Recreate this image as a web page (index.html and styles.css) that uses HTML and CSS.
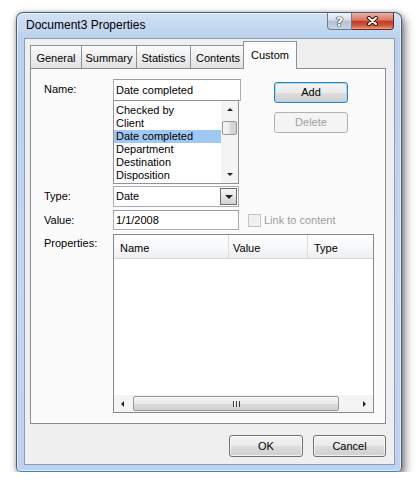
FILE: index.html
```html
<!DOCTYPE html>
<html lang="en">
<head>
    <meta charset="UTF-8">
    <title>Document3 Properties</title>
    <link rel="stylesheet" href="styles.css">
</head>
<body>
    <div class="desk">
        <div class="window">
            <div class="titlebar">
                <span class="title">Document3 Properties</span>
                <div class="caption-btns">
                    <span class="cap help">?</span>
                    <span class="cap close">
                        <svg width="13" height="10" viewBox="0 0 13 10">
                            <path d="M3 2 L10 8 M10 2 L3 8" stroke="#3d0c06" stroke-width="4.2" stroke-linecap="round"/>
                            <path d="M3 2 L10 8 M10 2 L3 8" stroke="#fff" stroke-width="2.2" stroke-linecap="round"/>
                        </svg>
                    </span>
                </div>
            </div>

            <div class="client">
                <div class="tabs">
                    <span class="tab">General</span>
                    <span class="tab">Summary</span>
                    <span class="tab">Statistics</span>
                    <span class="tab">Contents</span>
                    <span class="tab active">Custom</span>
                </div>

                <div class="panel">
                    <div class="name-row">
                        <span class="lbl">Name:</span>
                        <div class="stack">
                            <div class="input wide">Date completed</div>
                            <div class="listbox">
                                <ul class="items">
                                    <li>Checked by</li>
                                    <li>Client</li>
                                    <li class="selected">Date completed</li>
                                    <li>Department</li>
                                    <li>Destination</li>
                                    <li>Disposition</li>
                                </ul>
                                <div class="vscroll">
                                    <span class="sb-btn"><i class="arrow up"></i></span>
                                    <span class="vthumb"></span>
                                    <span class="sb-track"></span>
                                    <span class="sb-btn"><i class="arrow down"></i></span>
                                </div>
                            </div>
                        </div>
                        <div class="side-btns">
                            <span class="btn default">Add</span>
                            <span class="btn disabled">Delete</span>
                        </div>
                    </div>

                    <div class="row type-row">
                        <span class="lbl">Type:</span>
                        <div class="combo">
                            <span class="combo-text">Date</span>
                            <span class="drop"><i class="arrow down"></i></span>
                        </div>
                    </div>

                    <div class="row value-row">
                        <span class="lbl">Value:</span>
                        <div class="input">1/1/2008</div>
                        <span class="check"></span>
                        <span class="check-label">Link to content</span>
                    </div>

                    <div class="row props-row">
                        <span class="lbl">Properties:</span>
                        <div class="listview">
                            <div class="lv-header">
                                <span class="col col-name">Name</span>
                                <span class="col col-value">Value</span>
                                <span class="col col-type">Type</span>
                            </div>
                            <div class="lv-body"></div>
                            <div class="hscroll">
                                <span class="sb-btn"><i class="arrow left"></i></span>
                                <span class="hthumb"><i class="grip"></i></span>
                                <span class="sb-track"></span>
                                <span class="sb-btn"><i class="arrow right"></i></span>
                            </div>
                        </div>
                    </div>
                </div>

                <div class="footer">
                    <span class="btn ok">OK</span>
                    <span class="btn cancel">Cancel</span>
                </div>
            </div>
        </div>
    </div>
</body>
</html>
```

FILE: styles.css
```css
* {
    box-sizing: border-box;
}

body {
    margin: 0;
    background: #fff;
    font-family: "Liberation Sans", Arial, sans-serif;
    font-size: 11px;
    color: #000;
}

.desk {
    padding: 12px 0 0 16px;
}

/* window frame */

.window {
    width: 386px;
    height: 460px;
    display: flex;
    flex-direction: column;
    border: 1px solid #4c5e74;
    border-bottom-color: #2f8fbd;
    border-radius: 7px 7px 5px 5px;
    background: linear-gradient(180deg, #d2e2f5 0, #b9d0ec 26px, #c3d6f0 60%, #bfd1f0 100%);
    box-shadow: inset 0 0 0 1px rgba(255, 255, 255, 0.55),
                3px 5px 10px rgba(0, 0, 0, 0.5),
                0 0 4px rgba(0, 0, 0, 0.25);
}

.titlebar {
    height: 25px;
    display: flex;
    align-items: flex-start;
    padding: 0 7px 0 9px;
}

.title {
    flex: 1;
    font-size: 12px;
    line-height: 25px;
}

.caption-btns {
    display: flex;
}

.cap {
    height: 17px;
    display: flex;
    align-items: center;
    justify-content: center;
    border: 1px solid #6b7b90;
    border-top: none;
}

.help {
    width: 25px;
    border-radius: 0 0 0 4px;
    background: linear-gradient(180deg, #eef2f8 0, #d5dee9 45%, #b3c2d5 50%, #c6d3e3 100%);
    color: #fff;
    font-family: "DejaVu Sans", sans-serif;
    font-weight: bold;
    font-size: 13px;
    text-shadow: 0 0 1px #222, 0 0 1px #222, 0 0 1px #222;
}

.close {
    width: 42px;
    border-color: #6c2518;
    border-left: none;
    border-radius: 0 0 4px 0;
    background: linear-gradient(180deg, #eab1a4 0, #da7562 45%, #c23c22 52%, #cf5a3e 80%, #e8a184 100%);
}

/* client area */

.client {
    flex: 1;
    margin: 0 6px 6px 7px;
    padding: 2px 8px 0 5px;
    border: 1px solid #8a9db6;
    background: #efefef;
}

.tabs {
    height: 27px;
    display: flex;
    align-items: flex-end;
}

.tab {
    height: 23px;
    margin-right: -1px;
    padding-top: 2px;
    line-height: 20px;
    text-align: center;
    border: 1px solid #8d9098;
    border-bottom: none;
    background: linear-gradient(180deg, #fbfbfb 0, #eeeeee 50%, #e3e3e3 100%);
}

.tab:nth-child(1) { width: 52px; }
.tab:nth-child(2) { width: 56px; }
.tab:nth-child(3) { width: 55px; }
.tab:nth-child(4) { width: 56px; }

.tab.active {
    position: relative;
    z-index: 1;
    width: 54px;
    height: 28px;
    margin-left: -2px;
    margin-bottom: -1px;
    padding-top: 1px;
    line-height: 25px;
    background: #fbfbfb;
}

.panel {
    padding: 10px 0 10px 13px;
    border: 1px solid #898c95;
    background: #fbfbfb;
}

.lbl {
    width: 69px;
    flex: none;
    line-height: 21px;
}

.name-row,
.row {
    display: flex;
    align-items: flex-start;
}

.stack {
    width: 128px;
}

.input {
    width: 126px;
    height: 20px;
    padding-left: 2px;
    line-height: 18px;
    border: 1px solid #abadb3;
    border-top-color: #9a9ca3;
    background: #fff;
}

.input.wide {
    width: 128px;
    height: 22px;
    line-height: 20px;
}

.listbox {
    width: 126px;
    height: 84px;
    margin-top: -1px;
    display: flex;
    border: 1px solid #8f9299;
    background: #fff;
}

.items {
    flex: 1;
    margin: 0;
    padding: 3px 0 0 0;
    list-style: none;
}

.items li {
    height: 13px;
    padding-left: 2px;
    line-height: 13px;
}

.items li.selected {
    background: #9fc8f2;
}

/* scrollbars */

.vscroll {
    width: 17px;
    display: flex;
    flex-direction: column;
    background: #f4f4f4;
}

.hscroll {
    height: 17px;
    display: flex;
    align-items: center;
    background: #f4f4f4;
}

.sb-btn {
    width: 17px;
    height: 17px;
    flex: none;
    display: flex;
    align-items: center;
    justify-content: center;
}

.sb-track {
    flex: 1;
}

.vthumb {
    height: 14px;
    margin: 3px 1px 0 1px;
    border: 1px solid #9a9a9a;
    border-radius: 2px;
    background: linear-gradient(90deg, #f6f6f6 0, #e9e9e9 50%, #d9d9d9 51%, #d2d2d2 100%);
}

.hthumb {
    width: 206px;
    height: 15px;
    margin-left: 2px;
    display: flex;
    align-items: center;
    justify-content: center;
    border: 1px solid #9a9a9a;
    border-radius: 2px;
    background: linear-gradient(180deg, #f6f6f6 0, #e9e9e9 50%, #d9d9d9 51%, #d2d2d2 100%);
}

.grip {
    width: 7px;
    height: 6px;
    background: repeating-linear-gradient(90deg, #3c3c3c 0, #3c3c3c 1px, #fff 1px, #fff 2px, transparent 2px, transparent 3px);
}

.arrow {
    width: 0;
    height: 0;
    border: 4px solid transparent;
}

.arrow.up {
    border-top: none;
    border-bottom: 4px solid #222;
    border-width: 0 3px 3px 3px;
}

.arrow.down {
    border-bottom: none;
    border-top: 4px solid #222;
    border-width: 3px 3px 0 3px;
}

.arrow.left {
    border-width: 3px 3px 3px 0;
    border-right-color: #222;
}

.arrow.right {
    border-width: 3px 0 3px 3px;
    border-left-color: #222;
}

/* buttons */

.side-btns {
    margin-left: 33px;
    padding-top: 3px;
    display: flex;
    flex-direction: column;
    gap: 9px;
}

.btn {
    width: 74px;
    height: 21px;
    line-height: 19px;
    text-align: center;
    border: 1px solid #707070;
    border-radius: 3px;
    background: linear-gradient(180deg, #f2f2f2 0, #ebebeb 50%, #dddddd 51%, #cfcfcf 100%);
    box-shadow: inset 0 0 0 1px rgba(255, 255, 255, 0.7);
}

.btn.default {
    border-color: #3c7fb1;
    box-shadow: inset 0 0 0 1px #9edcf6;
}

.btn.disabled {
    color: #a0a0a0;
    border-color: #adb2b5;
    background: #f4f4f4;
    box-shadow: none;
}

/* type / value rows */

.type-row {
    margin-top: 2px;
}

.combo {
    width: 126px;
    height: 21px;
    display: flex;
    border: 1px solid #abadb3;
    background: #fff;
}

.combo-text {
    flex: 1;
    padding-left: 2px;
    line-height: 19px;
}

.drop {
    width: 17px;
    margin: 1px;
    display: flex;
    align-items: center;
    justify-content: center;
    border: 1px solid #6d6d6d;
    background: linear-gradient(180deg, #f3f3f3 0, #e6e6e6 50%, #d2d2d2 100%);
}

.drop .arrow.down {
    border-width: 4px 4px 0 4px;
}

.value-row {
    margin-top: 3px;
    align-items: center;
}

.value-row .lbl {
    line-height: 20px;
}

.check {
    width: 13px;
    height: 13px;
    margin-left: 9px;
    border: 1px solid #c2c2c2;
    background: linear-gradient(135deg, #e6e6e6, #f6f6f6);
    box-shadow: inset 0 0 0 2px #f2f2f2;
}

.check-label {
    margin-left: 3px;
    color: #9c9c9c;
}

/* properties list */

.props-row {
    margin-top: 4px;
}

.props-row .lbl {
    line-height: 18px;
}

.listview {
    width: 261px;
    height: 179px;
    display: flex;
    flex-direction: column;
    border: 1px solid #828790;
    background: #fff;
}

.lv-header {
    height: 24px;
    display: flex;
    border-bottom: 1px solid #d5d5d5;
    background: linear-gradient(180deg, #ffffff 0, #f7f8f9 50%, #eeeff1 100%);
}

.col {
    padding-top: 2px;
    line-height: 22px;
    border-right: 1px solid #dcdcdc;
}

.col-name {
    width: 115px;
    padding-left: 6px;
}

.col-value {
    width: 79px;
    padding-left: 4px;
}

.col-type {
    flex: 1;
    padding-left: 6px;
    border-right: none;
}

.lv-body {
    flex: 1;
}

/* footer */

.footer {
    padding-top: 11px;
    display: flex;
    justify-content: flex-end;
    gap: 10px;
}

.btn.ok,
.btn.cancel {
    height: 22px;
    line-height: 20px;
}

.btn.cancel {
    width: 73px;
}
```
